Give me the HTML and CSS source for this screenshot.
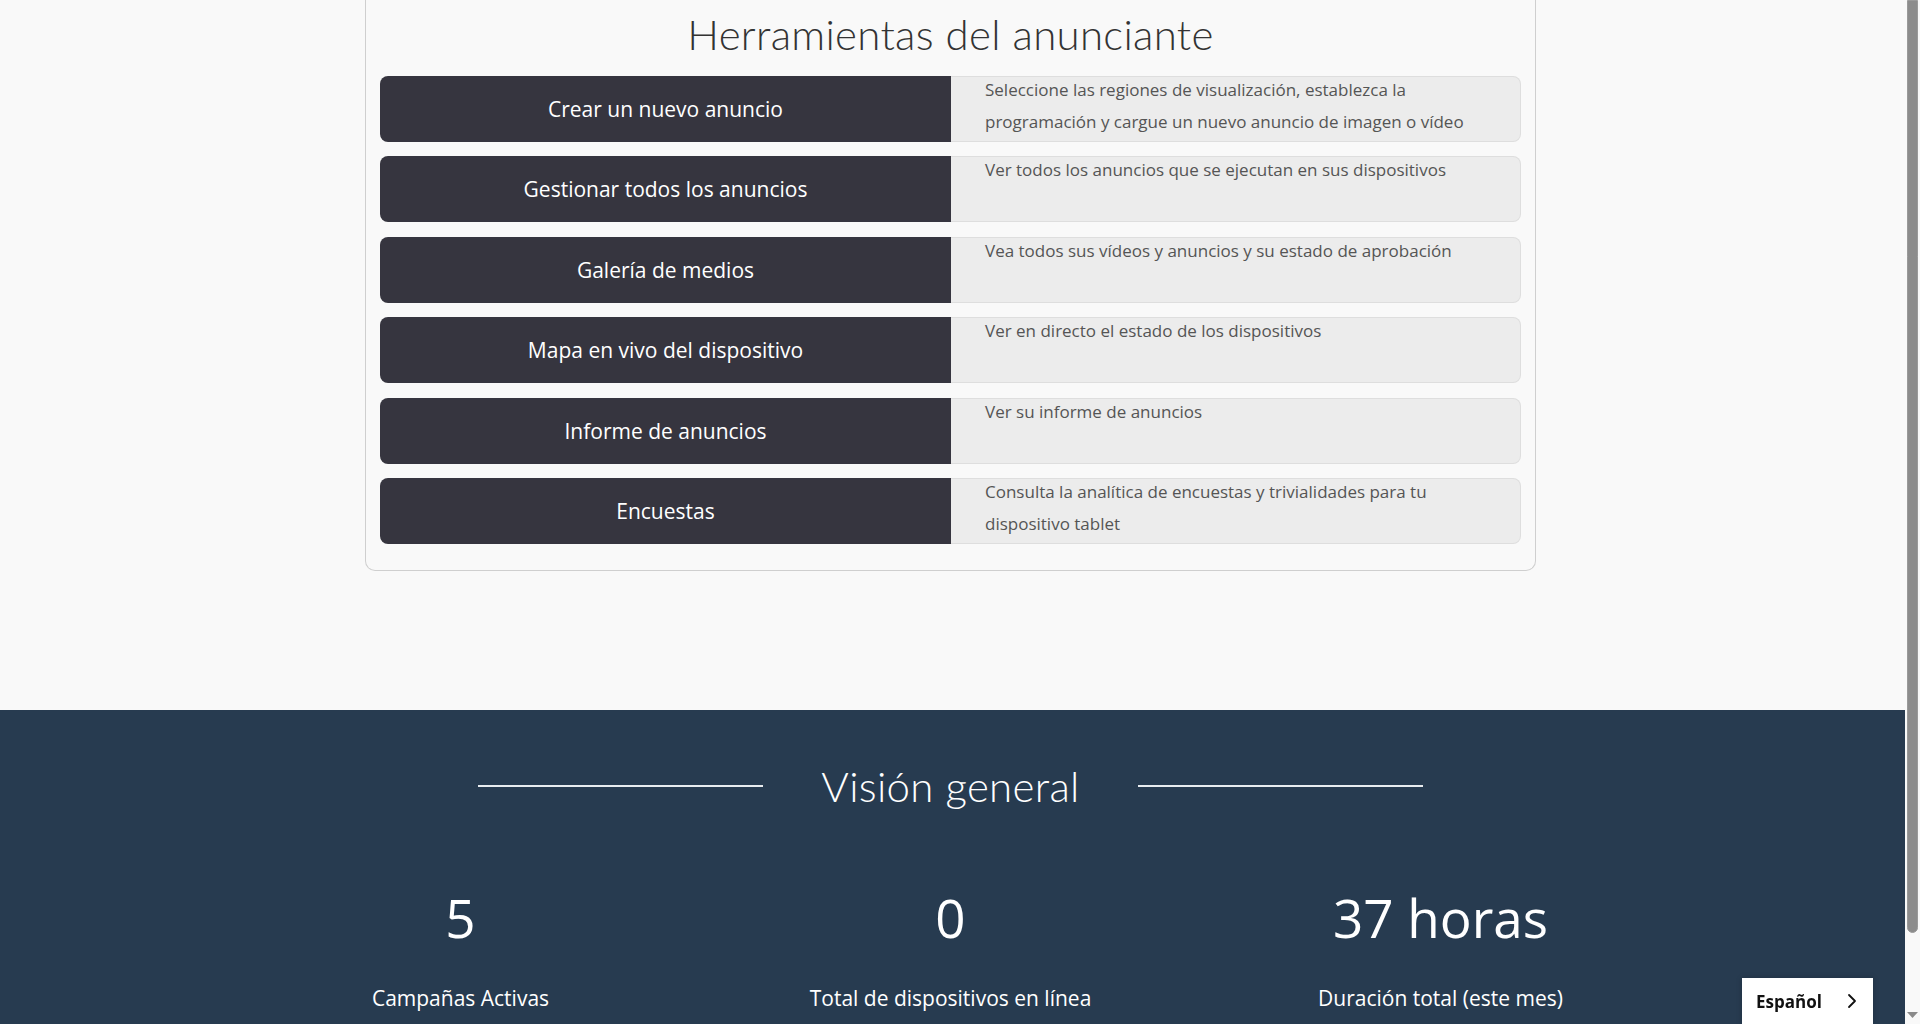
FILE: index.html
```html
<!DOCTYPE html>
<html lang="es">
<head>
<meta charset="utf-8">
<title>Herramientas del anunciante</title>
<link rel="stylesheet" href="styles.css">
</head>
<body>
<main class="page">
  <section class="tools-wrap">
    <div class="tools-card">
      <h2 class="tools-title">Herramientas del anunciante</h2>
      <ul class="tools-list">
        <li class="tool-row">
          <a class="tool-btn" href="#">Crear un nuevo anuncio</a>
          <p class="tool-desc"><span>Seleccione las regiones de visualización, establezca la programación y cargue un nuevo anuncio de imagen o vídeo</span></p>
        </li>
        <li class="tool-row">
          <a class="tool-btn" href="#">Gestionar todos los anuncios</a>
          <p class="tool-desc"><span>Ver todos los anuncios que se ejecutan en sus dispositivos</span></p>
        </li>
        <li class="tool-row">
          <a class="tool-btn" href="#">Galería de medios</a>
          <p class="tool-desc"><span>Vea todos sus vídeos y anuncios y su estado de aprobación</span></p>
        </li>
        <li class="tool-row">
          <a class="tool-btn" href="#">Mapa en vivo del dispositivo</a>
          <p class="tool-desc"><span>Ver en directo el estado de los dispositivos</span></p>
        </li>
        <li class="tool-row">
          <a class="tool-btn" href="#">Informe de anuncios</a>
          <p class="tool-desc"><span>Ver su informe de anuncios</span></p>
        </li>
        <li class="tool-row">
          <a class="tool-btn" href="#">Encuestas</a>
          <p class="tool-desc"><span>Consulta la analítica de encuestas y trivialidades para tu dispositivo tablet</span></p>
        </li>
      </ul>
    </div>
  </section>

  <section class="overview">
    <div class="overview-head">
      <span class="overview-line"></span>
      <h2 class="overview-title">Visión general</h2>
      <span class="overview-line"></span>
    </div>
    <div class="stats">
      <div class="stat">
        <div class="stat-value">5</div>
        <div class="stat-label">Campañas Activas</div>
      </div>
      <div class="stat">
        <div class="stat-value">0</div>
        <div class="stat-label">Total de dispositivos en línea</div>
      </div>
      <div class="stat">
        <div class="stat-value">37 horas</div>
        <div class="stat-label">Duración total (este mes)</div>
      </div>
    </div>
  </section>
</main>

<div class="lang-switch">
  <span class="lang-name">Español</span>
  <svg class="lang-chevron" width="10" height="16" viewBox="0 0 10 16" aria-hidden="true">
    <path d="M2 2 L8 8 L2 14" fill="none" stroke="#111" stroke-width="1.8" stroke-linecap="round" stroke-linejoin="round"/>
  </svg>
</div>

<div class="fake-scrollbar" aria-hidden="true">
  <div class="fake-thumb"></div>
  <svg class="fake-arrow" width="11" height="7" viewBox="0 0 11 7">
    <path d="M0 0 H11 L5.5 6 Z" fill="#8a8a8a"/>
  </svg>
</div>
</body>
</html>
```

FILE: styles.css
```css
body {
  margin: 0 15px 0 0;
  background: #f9f9f9;
  font-family: "Open Sans", "Liberation Sans", sans-serif;
  color: #333;
}

.page {
  display: flex;
  flex-direction: column;
}

.tools-wrap {
  display: flex;
  justify-content: center;
  padding-right: 4px;
  padding-bottom: 139px;
}

.tools-card {
  width: 1171px;
  box-sizing: border-box;
  margin-top: -20px;
  padding: 0 14px 26px 14px;
  border: 1px solid #cfcfcf;
  border-top: none;
  border-radius: 0 0 10px 10px;
  background: #f9f9f9;
}

.tools-title {
  margin: 0;
  padding-top: 30px;
  height: 96px;
  box-sizing: border-box;
  text-align: center;
  font-family: "Lato", "Liberation Sans", sans-serif;
  font-weight: 300;
  font-size: 42px;
  line-height: 48px;
  color: #333;
  letter-spacing: 0.3px;
}

.tools-list {
  list-style: none;
  margin: 0;
  padding: 0;
  display: flex;
  flex-direction: column;
  gap: 14.4px;
}

.tool-row {
  display: flex;
  height: 66px;
}

.tool-btn {
  flex: 0 0 571px;
  display: flex;
  align-items: center;
  justify-content: center;
  background: #36353f;
  color: #fff;
  text-decoration: none;
  font-size: 21px;
  border-radius: 8px 0 0 8px;
}

.tool-desc {
  flex: 1;
  margin: 0;
  box-sizing: border-box;
  padding: 0 40px 0 34px;
  background: #ececec;
  border: 1px solid #dedede;
  border-left: none;
  border-radius: 0 8px 8px 0;
  font-size: 17px;
  line-height: 32px;
  color: #555;
  overflow: hidden;
}

.tool-desc span {
  display: block;
  margin-top: -3px;
}

.overview {
  background: #273b50;
  color: #fff;
  padding: 40px 0 13px;
}

.overview-head {
  display: flex;
  align-items: center;
  justify-content: center;
  gap: 58px;
  height: 72px;
  padding-right: 4px;
}

.overview-line {
  width: 285px;
  height: 2px;
  background: #e8ecf0;
}

.overview-title {
  margin: 0;
  font-family: "Lato", "Liberation Sans", sans-serif;
  font-weight: 300;
  font-size: 42px;
  line-height: 48px;
  letter-spacing: 0.3px;
}

.stats {
  display: grid;
  grid-template-columns: repeat(3, 490px);
  justify-content: center;
  padding-right: 4px;
  margin-top: 60px;
}

.stat {
  display: flex;
  flex-direction: column;
  align-items: center;
}

.stat-value {
  font-size: 53px;
  line-height: 72px;
}

.stat-label {
  margin-top: 30px;
  font-size: 21px;
  line-height: 28px;
}

.lang-switch {
  position: fixed;
  right: 47px;
  bottom: 0;
  width: 131px;
  height: 46px;
  box-sizing: border-box;
  padding: 0 16px 0 14px;
  background: #fff;
  display: flex;
  align-items: center;
  justify-content: space-between;
  box-shadow: 0 0 6px rgba(0, 0, 0, 0.2);
}

.lang-name {
  font-weight: 700;
  font-size: 17px;
  color: #111;
}

.lang-chevron {
  display: block;
}

.fake-scrollbar {
  position: fixed;
  top: 0;
  right: 0;
  bottom: 0;
  width: 15px;
  background: #f9f9f9;
  display: flex;
  flex-direction: column;
  align-items: center;
}

.fake-thumb {
  width: 11px;
  height: 933px;
  box-sizing: border-box;
  background: #8c8c8c;
  border: 1px solid #9a9a9a;
  border-radius: 0 0 6px 6px;
}

.fake-arrow {
  margin-top: auto;
  margin-bottom: 5px;
}
```
